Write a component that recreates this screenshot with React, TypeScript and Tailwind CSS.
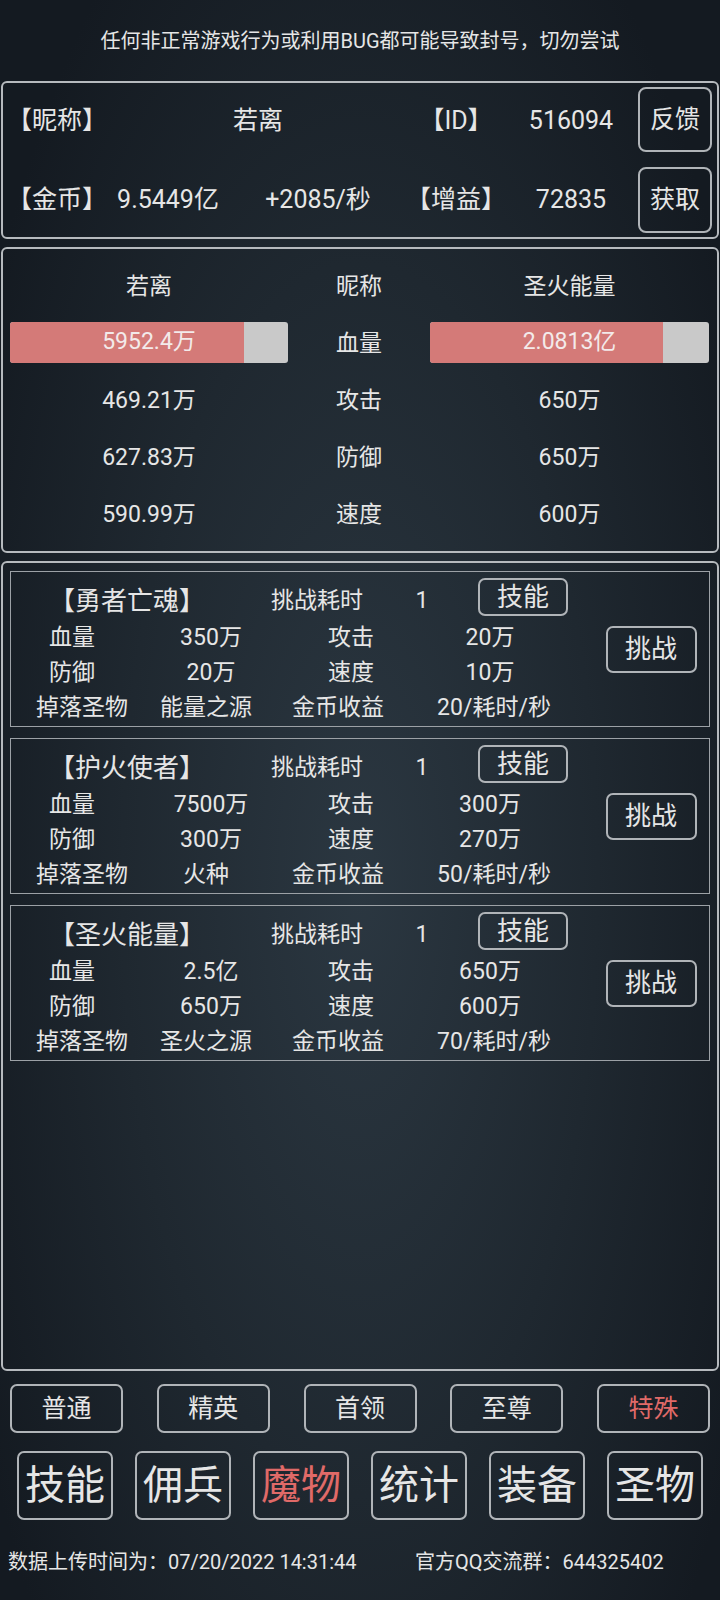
import React from "react";

// 怪物列表
interface Monster {
  name: string;
  time: string;
  hp: string;
  atk: string;
  def: string;
  spd: string;
  drop: string;
  gold: string;
}

const monsters: Monster[] = [
  { name: "【勇者亡魂】", time: "1", hp: "350万", atk: "20万", def: "20万", spd: "10万", drop: "能量之源", gold: "20/耗时/秒" },
  { name: "【护火使者】", time: "1", hp: "7500万", atk: "300万", def: "300万", spd: "270万", drop: "火种", gold: "50/耗时/秒" },
  { name: "【圣火能量】", time: "1", hp: "2.5亿", atk: "650万", def: "650万", spd: "600万", drop: "圣火之源", gold: "70/耗时/秒" },
];

const tabs = ["普通", "精英", "首领", "至尊", "特殊"];
const navs = ["技能", "佣兵", "魔物", "统计", "装备", "圣物"];

const fontClass = "font-['Roboto','Noto_Sans_CJK_SC',sans-serif]";
const panelClass = "border-2 border-[#b6babe] rounded-[6px]";
const btnClass = "flex items-center justify-center border-2 border-[#b0b4b8] rounded-[7px]";
const cell = "flex justify-center items-center whitespace-nowrap";

function MonsterCard({ m }: { m: Monster }) {
  return (
    <div className="flex h-[156px] border-[1.5px] border-[#9ca1a6] pt-[9px]">
      <div className="flex flex-col w-[582px]">
        {/* 标题行 */}
        <div className="grid grid-cols-[232px_148px_62px_140px] h-[40px] items-center">
          <div className={`${cell} text-[26px]`}>{m.name}</div>
          <div className={`${cell} text-[23px]`}>挑战耗时</div>
          <div className={`${cell} text-[23px]`}>{m.time}</div>
          <div className={`${cell} -mt-[8px]`}>
            <div className={`${btnClass} w-[90px] h-[38px] text-[26px] rounded-[6px]`}>技能</div>
          </div>
        </div>
        <div className="grid grid-cols-[122px_156px_124px_154px] h-[35px] items-center text-[23px]">
          <div className={cell}>血量</div>
          <div className={cell}>{m.hp}</div>
          <div className={cell}>攻击</div>
          <div className={cell}>{m.atk}</div>
        </div>
        <div className="grid grid-cols-[122px_156px_124px_154px] h-[35px] items-center text-[23px]">
          <div className={cell}>防御</div>
          <div className={cell}>{m.def}</div>
          <div className={cell}>速度</div>
          <div className={cell}>{m.spd}</div>
        </div>
        <div className="grid grid-cols-[142px_106px_158px_154px] h-[35px] items-center text-[23px]">
          <div className={cell}>掉落圣物</div>
          <div className={cell}>{m.drop}</div>
          <div className={cell}>金币收益</div>
          <div className={cell}>{m.gold}</div>
        </div>
      </div>
      <div className="flex-1 flex items-center justify-center -mt-[9px]">
        <div className={`${btnClass} w-[91px] h-[47px] text-[26px]`}>挑战</div>
      </div>
    </div>
  );
}

function Bar({ value, pct }: { value: string; pct: number }) {
  return (
    <div className="relative h-[41px] -mt-[5px] rounded-[3px] bg-[#c9c9c9] overflow-hidden">
      <div className="h-full bg-[#d47a78]" style={{ width: `${pct}%` }} />
      <div className="absolute inset-0 flex items-center justify-center text-[23px] text-[#f3eaea]">{value}</div>
    </div>
  );
}

export default function App() {
  const statRows = [
    ["469.21万", "攻击", "650万"],
    ["627.83万", "防御", "650万"],
    ["590.99万", "速度", "600万"],
  ];

  return (
    <div
      className={`${fontClass} w-[720px] h-[1600px] text-[#e6e6e6] bg-[radial-gradient(ellipse_60%_70%_at_50%_55%,#2b3741_0%,#1f2830_55%,#141a21_100%)] overflow-hidden`}
    >
      {/* 顶部提示 */}
      <div className="h-[81px] flex items-center justify-center text-[20px]">
        任何非正常游戏行为或利用BUG都可能导致封号，切勿尝试
      </div>

      {/* 玩家信息 */}
      <div className={`${panelClass} mx-[1px] h-[158px] pt-[4px] flex flex-col gap-[15px] text-[25px]`}>
        <div className="grid grid-cols-[105px_300px_96px_134px_74px] h-[65px] items-center">
          <div className="pl-[4px] whitespace-nowrap pt-[2px]">【昵称】</div>
          <div className={`${cell} pt-[2px]`}>若离</div>
          <div className={`${cell} pt-[2px]`}>【ID】</div>
          <div className={`${cell} pt-[2px]`}>516094</div>
          <div className={`${btnClass} h-[65px] rounded-[8px]`}>反馈</div>
        </div>
        <div className="grid grid-cols-[105px_120px_180px_96px_134px_74px] h-[65px] items-center">
          <div className="pl-[4px] whitespace-nowrap">【金币】</div>
          <div className={cell}>9.5449亿</div>
          <div className={cell}>+2085/秒</div>
          <div className={cell}>【增益】</div>
          <div className={cell}>72835</div>
          <div className={`${btnClass} h-[66px] rounded-[8px]`}>获取</div>
        </div>
      </div>

      {/* 对战属性 */}
      <div className={`${panelClass} mx-[1px] mt-[8px] h-[306px] pt-[10px] px-[7px] text-[23px]`}>
        <div className="grid grid-cols-[278px_142px_279px] h-[57px] items-center">
          <div className={cell}>若离</div>
          <div className={cell}>昵称</div>
          <div className={cell}>圣火能量</div>
        </div>
        <div className="grid grid-cols-[278px_142px_279px] h-[57px] items-center">
          <Bar value="5952.4万" pct={84} />
          <div className={cell}>血量</div>
          <Bar value="2.0813亿" pct={83.5} />
        </div>
        {statRows.map((r) => (
          <div key={r[1]} className="grid grid-cols-[278px_142px_279px] h-[57px] items-center">
            <div className={cell}>{r[0]}</div>
            <div className={cell}>{r[1]}</div>
            <div className={cell}>{r[2]}</div>
          </div>
        ))}
      </div>

      {/* 魔物列表 */}
      <div className={`${panelClass} mx-[1px] mt-[8px] h-[810px] pt-[8px] px-[7px] flex flex-col gap-[11px]`}>
        {monsters.map((m) => (
          <MonsterCard key={m.name} m={m} />
        ))}
      </div>

      {/* 难度分类 */}
      <div className="flex justify-between px-[10px] mt-[13px]">
        {tabs.map((t) => (
          <div
            key={t}
            className={`${btnClass} w-[113px] h-[49px] text-[25px] ${t === "特殊" ? "text-[#e06a68]" : ""}`}
          >
            {t}
          </div>
        ))}
      </div>

      {/* 底部导航 */}
      <div className="flex justify-between px-[17px] mt-[18px]">
        {navs.map((n) => (
          <div
            key={n}
            className={`${btnClass} w-[96px] h-[69px] text-[40px] ${n === "魔物" ? "text-[#e06a68]" : ""}`}
          >
            {n}
          </div>
        ))}
      </div>

      {/* 页脚 */}
      <div className="flex mt-[28px] h-[28px] items-center text-[20px] whitespace-nowrap">
        <div className="w-[415px] pl-[8px]">数据上传时间为：07/20/2022 14:31:44</div>
        <div>官方QQ交流群：644325402</div>
      </div>
    </div>
  );
}
